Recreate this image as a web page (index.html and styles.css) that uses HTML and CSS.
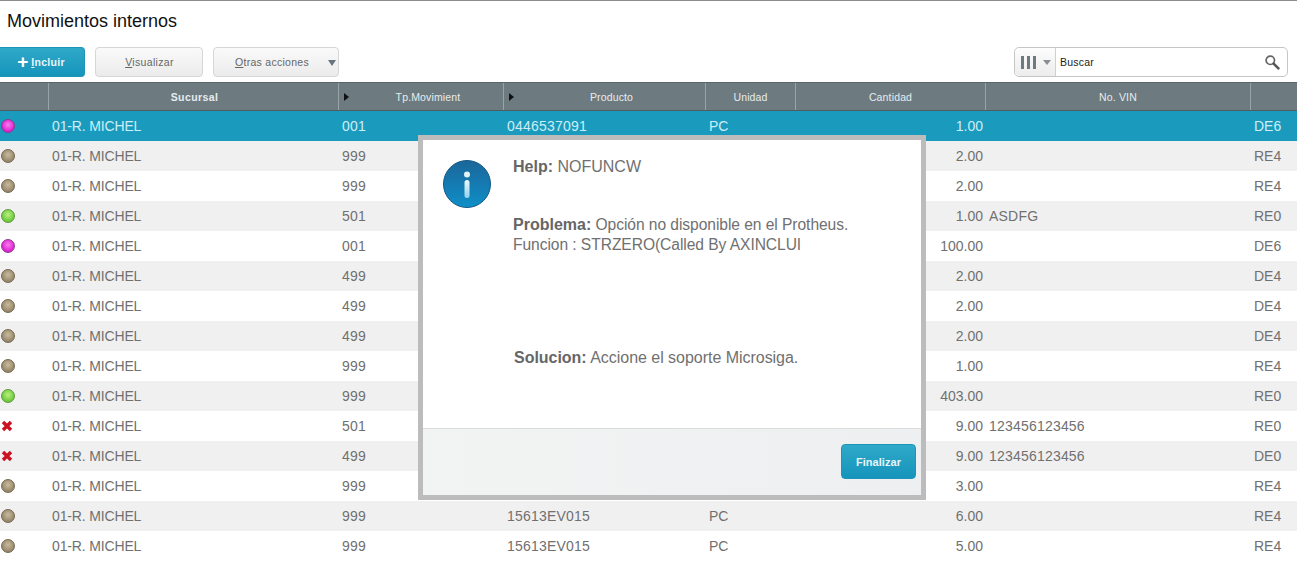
FILE: index.html
```html
<!DOCTYPE html>
<html lang="es">
<head>
<meta charset="utf-8">
<title>Movimientos internos</title>
<link rel="stylesheet" href="styles.css">
</head>
<body>
<div class="page">
  <h1 class="title">Movimientos internos</h1>
  <div class="toolbar">
    <button class="btn primary"><span class="plus">+</span><span><u>I</u>ncluir</span></button>
    <button class="btn view"><span><u>V</u>isualizar</span></button>
    <button class="btn more"><span class="more-label"><u>O</u>tras acciones</span><span class="caret"></span></button>
    <div class="search">
      <div class="columns-btn">
        <span class="bars"><i></i><i></i><i></i></span><span class="caret small"></span>
      </div>
      <span class="search-text">Buscar</span>
      <svg class="lens" width="16" height="16" viewBox="0 0 16 16"><circle cx="6.3" cy="6.3" r="4.2" fill="none" stroke="#666" stroke-width="1.7"/><path d="M9.6 9.6 14.4 14.4" stroke="#555" stroke-width="2.6" stroke-linecap="round"/></svg>
    </div>
  </div>
  <div class="grid">
    <div class="row head">
      <div class="hc"></div>
      <div class="hc strong">Sucursal</div>
      <div class="hc marked"><span class="mark"></span>Tp.Movimient</div>
      <div class="hc marked"><span class="mark"></span>Producto</div>
      <div class="hc">Unidad</div>
      <div class="hc">Cantidad</div>
      <div class="hc">No. VIN</div>
      <div class="hc"></div>
    </div>
    <div class="row selected"><div class="c st"><span class="dot magenta"></span></div><div class="c">01-R. MICHEL</div><div class="c">001</div><div class="c">0446537091</div><div class="c">PC</div><div class="c num">1.00</div><div class="c"></div><div class="c">DE6</div></div>
    <div class="row"><div class="c st"><span class="dot brown"></span></div><div class="c">01-R. MICHEL</div><div class="c">999</div><div class="c"></div><div class="c"></div><div class="c num">2.00</div><div class="c"></div><div class="c">RE4</div></div>
    <div class="row"><div class="c st"><span class="dot brown"></span></div><div class="c">01-R. MICHEL</div><div class="c">999</div><div class="c"></div><div class="c"></div><div class="c num">2.00</div><div class="c"></div><div class="c">RE4</div></div>
    <div class="row"><div class="c st"><span class="dot green"></span></div><div class="c">01-R. MICHEL</div><div class="c">501</div><div class="c"></div><div class="c"></div><div class="c num">1.00</div><div class="c">ASDFG</div><div class="c">RE0</div></div>
    <div class="row"><div class="c st"><span class="dot magenta"></span></div><div class="c">01-R. MICHEL</div><div class="c">001</div><div class="c"></div><div class="c"></div><div class="c num">100.00</div><div class="c"></div><div class="c">DE6</div></div>
    <div class="row"><div class="c st"><span class="dot brown"></span></div><div class="c">01-R. MICHEL</div><div class="c">499</div><div class="c"></div><div class="c"></div><div class="c num">2.00</div><div class="c"></div><div class="c">DE4</div></div>
    <div class="row"><div class="c st"><span class="dot brown"></span></div><div class="c">01-R. MICHEL</div><div class="c">499</div><div class="c"></div><div class="c"></div><div class="c num">2.00</div><div class="c"></div><div class="c">DE4</div></div>
    <div class="row"><div class="c st"><span class="dot brown"></span></div><div class="c">01-R. MICHEL</div><div class="c">499</div><div class="c"></div><div class="c"></div><div class="c num">2.00</div><div class="c"></div><div class="c">DE4</div></div>
    <div class="row"><div class="c st"><span class="dot brown"></span></div><div class="c">01-R. MICHEL</div><div class="c">999</div><div class="c"></div><div class="c"></div><div class="c num">1.00</div><div class="c"></div><div class="c">RE4</div></div>
    <div class="row"><div class="c st"><span class="dot green"></span></div><div class="c">01-R. MICHEL</div><div class="c">999</div><div class="c"></div><div class="c"></div><div class="c num">403.00</div><div class="c"></div><div class="c">RE0</div></div>
    <div class="row"><div class="c st"><svg class="x" width="12" height="12" viewBox="0 0 12 12"><path d="M2 2 10 10M10 2 2 10" stroke="#cc1120" stroke-width="3.4"/></svg></div><div class="c">01-R. MICHEL</div><div class="c">501</div><div class="c"></div><div class="c"></div><div class="c num">9.00</div><div class="c">123456123456</div><div class="c">RE0</div></div>
    <div class="row"><div class="c st"><svg class="x" width="12" height="12" viewBox="0 0 12 12"><path d="M2 2 10 10M10 2 2 10" stroke="#cc1120" stroke-width="3.4"/></svg></div><div class="c">01-R. MICHEL</div><div class="c">499</div><div class="c"></div><div class="c"></div><div class="c num">9.00</div><div class="c">123456123456</div><div class="c">DE0</div></div>
    <div class="row"><div class="c st"><span class="dot brown"></span></div><div class="c">01-R. MICHEL</div><div class="c">999</div><div class="c"></div><div class="c"></div><div class="c num">3.00</div><div class="c"></div><div class="c">RE4</div></div>
    <div class="row"><div class="c st"><span class="dot brown"></span></div><div class="c">01-R. MICHEL</div><div class="c">999</div><div class="c">15613EV015</div><div class="c">PC</div><div class="c num">6.00</div><div class="c"></div><div class="c">RE4</div></div>
    <div class="row"><div class="c st"><span class="dot brown"></span></div><div class="c">01-R. MICHEL</div><div class="c">999</div><div class="c">15613EV015</div><div class="c">PC</div><div class="c num">5.00</div><div class="c"></div><div class="c">RE4</div></div>
  </div>
  <div class="dialog">
    <div class="dialog-body">
      <svg class="info" width="48" height="48" viewBox="0 0 48 48">
        <defs><linearGradient id="ig" x1="0" y1="0" x2="0" y2="1"><stop offset="0" stop-color="#1b6699"/><stop offset="1" stop-color="#0e8fc8"/></linearGradient><linearGradient id="is" x1="0" y1="0" x2="0" y2="1"><stop offset="0" stop-color="#eef8fb"/><stop offset="1" stop-color="#8fd3ea"/></linearGradient></defs>
        <circle cx="24" cy="24" r="23.500" fill="url(#ig)" stroke="#155a84" stroke-width="1"/>
        <circle cx="24" cy="14.500" r="3" fill="#e4f3f8"/>
        <rect x="21.500" y="20" width="5" height="18" rx="2.500" fill="url(#is)"/>
      </svg>
      <div class="messages">
        <p class="help"><b>Help:</b> NOFUNCW</p>
        <p class="problem"><b>Problema:</b> Opción no disponible en el Protheus.<br>Funcion : STRZERO(Called By AXINCLUI</p>
        <p class="solution"><b>Solucion:</b> Accione el soporte Microsiga.</p>
      </div>
    </div>
    <div class="dialog-foot"><button class="btn finish">Finalizar</button></div>
  </div>
</div>
</body>
</html>
```
FILE: styles.css
```css
* { box-sizing: border-box; }
html, body { margin: 0; padding: 0; background: #fff; }
body { font-family: "Liberation Sans", Arial, sans-serif; color: #707070; }
.page { position: relative; width: 1297px; height: 570px; overflow: hidden; border-top: 1px solid #8c8c8c; }
.title { margin: 0; height: 46px; padding: 10px 0 0 7px; font-size: 18px; line-height: 20px; font-weight: 400; color: #111; }
.toolbar { display: flex; height: 30px; align-items: stretch; margin-bottom: 5px; padding-right: 9px; }
.btn { font-family: inherit; font-size: 10.500px; letter-spacing: .4px; border-radius: 4px; padding: 0; display: flex; align-items: center; justify-content: center; }
.primary { width: 85px; color: #e8f6fb; font-weight: 700; border: 1px solid #1d95b8; border-left: 0; border-radius: 0 4px 4px 0; background: linear-gradient(#30a9c9, #1594bb); gap: 3px; letter-spacing: .3px; padding-right: 2px; }
.plus { font-size: 19px; line-height: 14px; font-weight: 700; color: #fff; letter-spacing: 0; }
.view { width: 108px; margin-left: 10px; color: #666; border: 1px solid #d6d6d6; background: linear-gradient(#fafafa, #ebebeb); padding-left: 1px; letter-spacing: .34px; }
.more { width: 126px; margin-left: 10px; color: #666; border: 1px solid #d6d6d6; background: linear-gradient(#fafafa, #ebebeb); justify-content: flex-start; padding-left: 21px; letter-spacing: .28px; }
.more-label { flex: 1; text-align: left; }
.caret { width: 0; height: 0; border-left: 4.500px solid transparent; border-right: 4.500px solid transparent; border-top: 6px solid #66757f; margin-right: 2px; margin-top: 1px; }
.caret.small { border-left-width: 4.500px; border-right-width: 4.500px; border-top-width: 5px; margin: 0 0 0 7px; border-top-color: #8a8f93; }
.search { margin-left: auto; width: 274px; border: 1px solid #c6c6c6; border-radius: 5px; display: flex; align-items: center; }
.columns-btn { width: 41px; height: 100%; display: flex; align-items: center; padding-left: 6px; border-right: 1px solid #d0d0d0; background: linear-gradient(#fdfdfd, #ececec); border-radius: 5px 0 0 5px; }
.bars { display: flex; gap: 3px; }
.bars i { display: block; width: 3px; height: 13px; background: #6d7a82; }
.search-text { flex: 1; padding-left: 4px; font-size: 10.500px; letter-spacing: .2px; color: #222; }
.lens { margin-right: 7px; }
.row { display: grid; grid-template-columns: 49px 290px 165px 202px 90px 190px 265px 46px; height: 30px; font-size: 14px; background: #fff; }
.row:nth-child(odd) { background: #f0f0f0; }
.row .c { padding-left: 3px; line-height: 30px; white-space: nowrap; overflow: hidden; }
.row .c.num { text-align: right; padding: 0 3px 0 0; }
.row .st { padding: 0; display: flex; align-items: center; }
.row .c:nth-child(2) { letter-spacing: -.15px; }
.row .c:nth-child(3), .row .c:nth-child(4), .row .c:nth-child(7) { letter-spacing: .2px; }
.row.head { height: 29px; background: #6d7b80; border-top: 1px solid #59666b; border-bottom: 1px solid #4f5b60; font-size: 10.500px; letter-spacing: .15px; color: #e6ecee; }
.hc { position: relative; display: flex; align-items: center; justify-content: center; border-right: 1px solid #98a4a8; padding-top: 2px; line-height: 25px; }
.hc:last-child { border-right: 0; }
.hc.strong { font-weight: 700; letter-spacing: .4px; padding-left: 2px; }
.hc.marked { padding-left: 14px; }
.mark { position: absolute; left: 5px; top: 10px; width: 0; height: 0; border-top: 4px solid transparent; border-bottom: 4px solid transparent; border-left: 5px solid #111; }
.row.selected { background: #1a9bbd; color: #cdeef7; }
.dot { display: block; width: 14px; height: 14px; margin-left: 1px; border-radius: 50%; }
.brown { background: radial-gradient(circle at 50% 40%, #c9bc9e, #96856a 70%); border: 1px solid #75684f; }
.green { background: radial-gradient(circle at 50% 40%, #b8f080, #6dc83a 70%); border: 1px solid #5f9a3a; }
.magenta { background: radial-gradient(circle at 50% 40%, #fb7cf0, #dd20d0 70%); border: 1px solid #8a3a8a; }
.x { margin-left: 1px; }
.dialog { position: absolute; left: 418px; top: 134px; width: 508px; height: 365px; border: 5px solid #bcbcbc; background: #fff; display: flex; flex-direction: column; }
.dialog-body { flex: 1; display: flex; padding: 20px 0 0 20px; }
.info { flex: none; }
.messages { margin: -3px 0 0 22px; font-size: 15.600px; line-height: 20px; color: #707070; }
.messages p { margin: 0; }
.help { height: 58px; font-size: 16px; }
.problem { height: 133px; letter-spacing: -.06px; }
.problem b { font-size: 16px; letter-spacing: 0; }
.solution { margin-left: 1px !important; font-size: 16px; letter-spacing: -.03px; }
.messages b { font-weight: 700; color: #666; }
.dialog-foot { height: 67px; border-top: 1px solid #dcdcdc; background: linear-gradient(90deg, #f2f3f3, #eeeff0); display: flex; justify-content: flex-end; align-items: flex-start; padding: 15px 5px 0 0; }
.finish { width: 75px; height: 35px; color: #e8f6fb; font-weight: 700; font-size: 11px; letter-spacing: .05px; border: 1px solid #1d95b8; background: linear-gradient(#30a9c9, #1594bb); }
```
